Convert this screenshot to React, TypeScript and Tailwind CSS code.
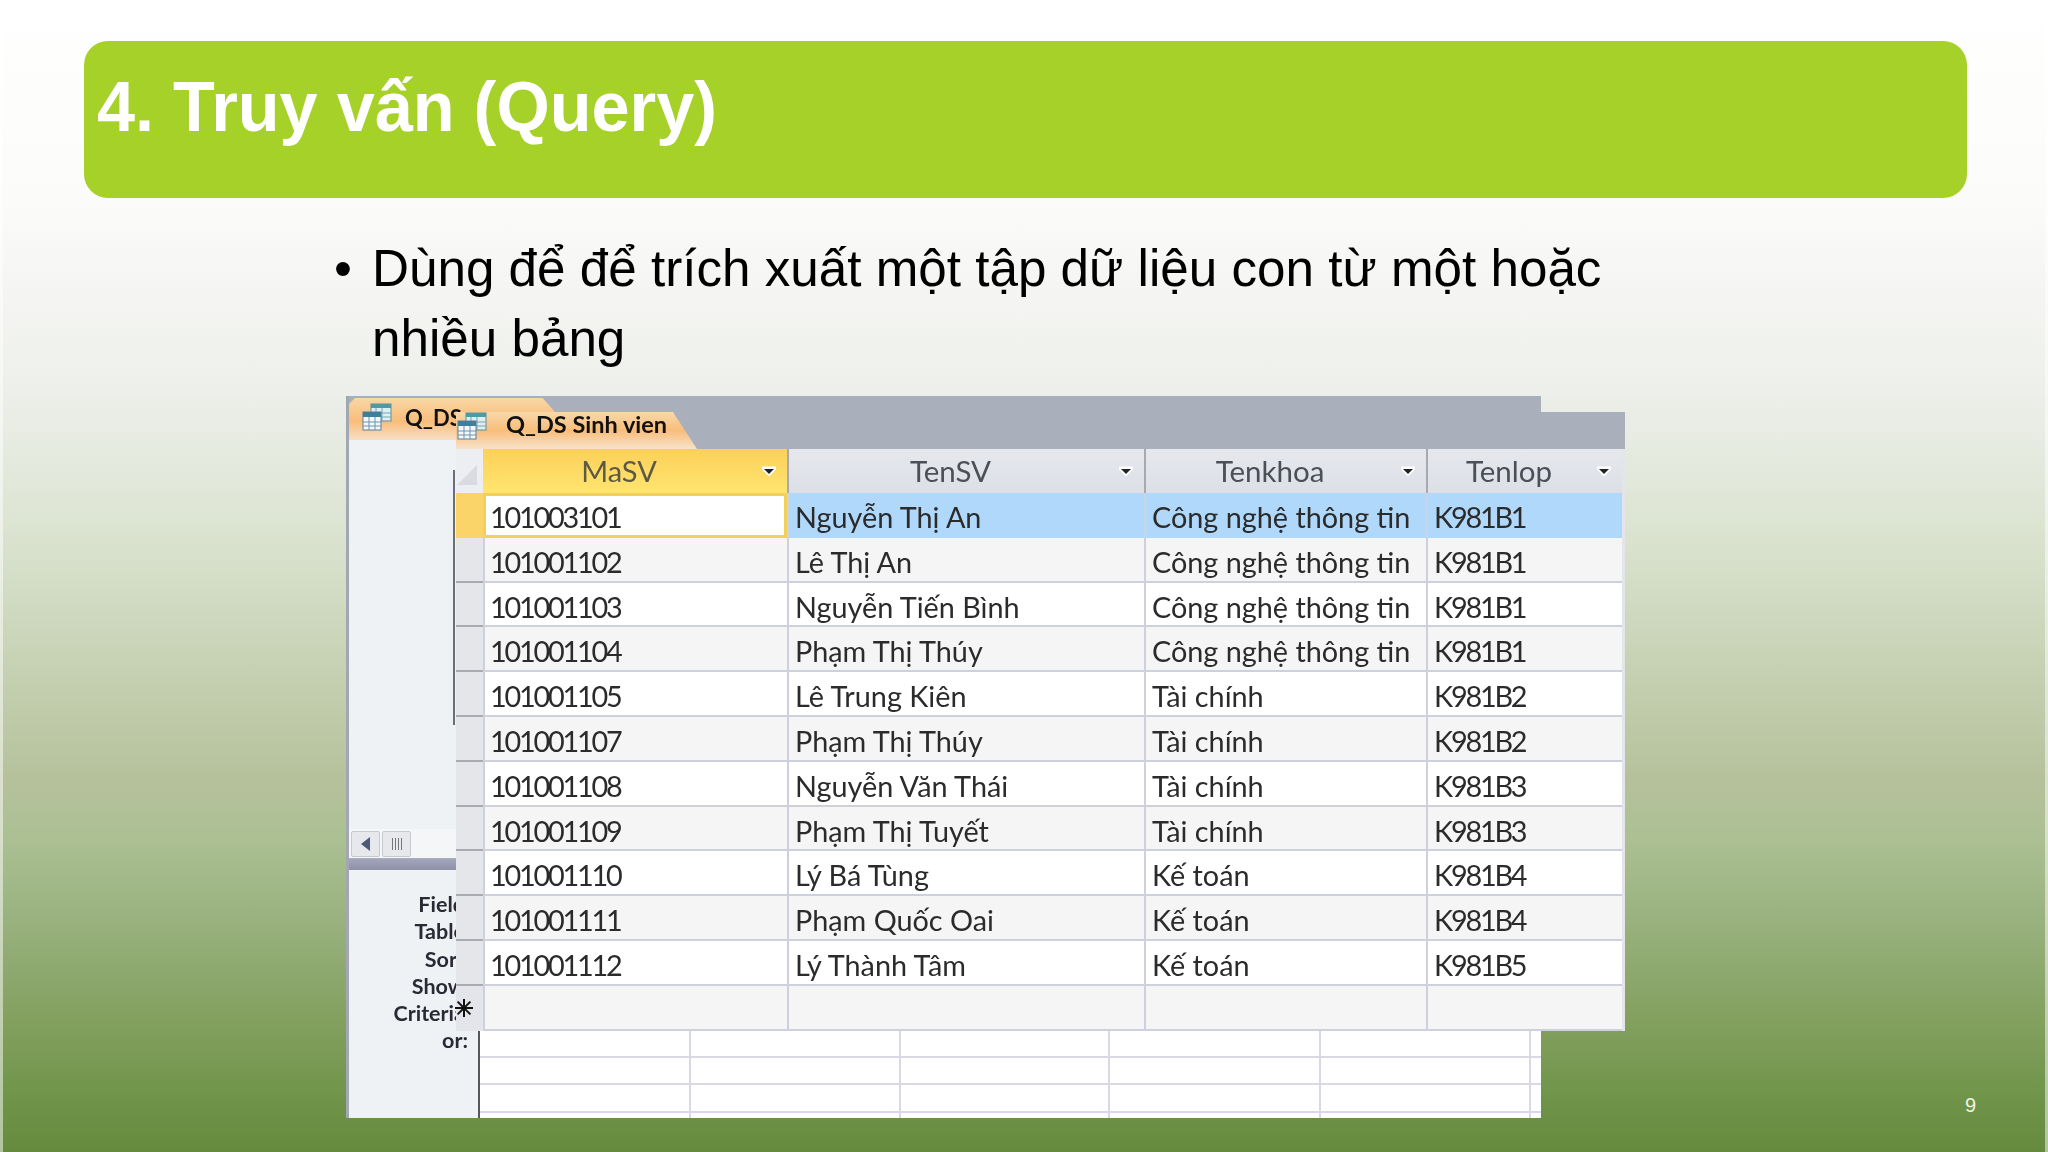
const rows = [
  ["101003101", "Nguyễn Thị An", "Công nghệ thông tin", "K981B1"],
  ["101001102", "Lê Thị An", "Công nghệ thông tin", "K981B1"],
  ["101001103", "Nguyễn Tiến Bình", "Công nghệ thông tin", "K981B1"],
  ["101001104", "Phạm Thị Thúy", "Công nghệ thông tin", "K981B1"],
  ["101001105", "Lê Trung Kiên", "Tài chính", "K981B2"],
  ["101001107", "Phạm Thị Thúy", "Tài chính", "K981B2"],
  ["101001108", "Nguyễn Văn Thái", "Tài chính", "K981B3"],
  ["101001109", "Phạm Thị Tuyết", "Tài chính", "K981B3"],
  ["101001110", "Lý Bá Tùng", "Kế toán", "K981B4"],
  ["101001111", "Phạm Quốc Oai", "Kế toán", "K981B4"],
  ["101001112", "Lý Thành Tâm", "Kế toán", "K981B5"],
];

const labels = ["Field", "Table", "Sort", "Show", "Criteria"];
const gridCols = "grid grid-cols-[27px_304px_357px_282px_196px]";

function QueryIcon({ className }: { className: string }) {
  return (
    <svg viewBox="0 0 30 28" className={className}>
      <rect x="9" y="1" width="20" height="17" fill="#dfeef2" stroke="#5d8f99" />
      <rect x="9" y="1" width="20" height="4" fill="#4f9aa3" />
      <path d="M14 5v13M20 5v13M9 10h20M9 14h20" stroke="#7aa3ad" />
      <rect x="1" y="9" width="18" height="18" fill="#f4f8fa" stroke="#5b7f9b" />
      <rect x="1" y="9" width="18" height="5" fill="#3f7f9c" />
      <path d="M7 14v13M13 14v13M1 19h18M1 23h18" stroke="#6f93ad" />
    </svg>
  );
}

function Arrow() {
  return (
    <svg viewBox="0 0 16 12" className="absolute right-[10px] top-[16px] h-[12px] w-[16px]">
      <path d="M1 1.5h14v3l-7 7-7-7z" fill="#ffffff" />
      <path d="M3 4h10l-5 5z" fill="#222222" />
    </svg>
  );
}

function HeaderCell({ name, active }: { name: string; active?: boolean }) {
  return (
    <div
      className={
        active
          ? "relative flex items-center justify-center pr-[32px] text-[29px] text-[#5c5a45] bg-[linear-gradient(180deg,#fbd05a,#ffe56f)]"
          : "relative flex items-center justify-center pr-[32px] text-[29.5px] text-[#4b5058] bg-[linear-gradient(180deg,#e6e8ed,#dcdfe6)] border-l-2 border-[#a7a9ae]"
      }
    >
      {name}
      <Arrow />
    </div>
  );
}

export default function App() {
  return (
    <div className="relative h-[1152px] w-[2048px] overflow-hidden bg-[linear-gradient(180deg,#ffffff_0%,#fbfbf9_17.4%,#eef0ec_33.2%,#dbe3d0_46.4%,#c8d3b6_56.9%,#b6c19c_67.4%,#acc093_72.7%,#97b07c_80.6%,#83a05f_88.5%,#6f9449_95.4%,#668a3d_100%)] pt-[41px] pl-[84px] font-['Liberation_Sans',sans-serif]">
      <div className="absolute inset-y-0 left-0 w-[3px] bg-white/50" />
      <div className="absolute inset-y-0 right-0 w-[3px] bg-white/50" />

      <div className="flex h-[157px] w-[1883px] rounded-[24px] bg-[#a6d129] pl-[13px] pt-[26px]">
        <h1 className="origin-left scale-x-[.964] whitespace-nowrap text-[71px] font-bold leading-[80px] text-white">
          4. Truy vấn (Query)
        </h1>
      </div>

      <div className="ml-[250px] mt-[36px] flex w-[1300px] text-[51.2px] leading-[70px] text-black">
        <span className="w-[38px] shrink-0">•</span>
        <p>
          Dùng để để trích xuất một tập dữ liệu con từ một hoặc
          <br />
          nhiều bảng
        </p>
      </div>

      {/* two Access windows laid over each other */}
      <div className="relative ml-[262px] mt-[22px] h-[722px] w-[1279px] font-['Lato',sans-serif] blur-[0.4px]">
        {/* back window: query design */}
        <div className="flex h-full w-[1195px] flex-col border-l-[3px] border-[#a2a8b1] bg-[#a9b0bb] pt-[2px]">
          <div className="flex h-[42px] w-[206px] items-start gap-[13px] bg-[linear-gradient(180deg,#f8d7a6,#f9bd7a_55%,#f7dfc6)] pl-[13px] pt-[5px] [clip-path:polygon(0_6px,6px_0,94%_0,100%_14px,100%_100%,0_100%)]">
            <QueryIcon className="h-[28px] w-[30px]" />
            <span className="text-[22px] font-bold leading-[30px] text-[#111111]">Q_DS</span>
          </div>
          <div className="h-[389px] w-[1192px] bg-[#eff2f5] pl-[104px] pt-[30px]">
            <div className="h-[255px] w-[2px] bg-[#6b6e74]" />
          </div>
          <div className="flex h-[29px] w-[1192px] items-center gap-[2px] bg-[#f5f6f8] pl-[2px]">
            <div className="flex h-[26px] w-[29px] items-center justify-center rounded-[2px] border border-[#c5c9d0] bg-[#e6e8ec]">
              <div className="h-0 w-0 border-y-[7px] border-r-[9px] border-y-transparent border-r-[#4a5a78]" />
            </div>
            <div className="flex h-[26px] w-[29px] items-center justify-center gap-[2px] rounded-[2px] border border-[#c5c9d0] bg-[#e6e8ec]">
              <i className="h-[12px] w-px bg-[#777]" />
              <i className="h-[12px] w-px bg-[#777]" />
              <i className="h-[12px] w-px bg-[#777]" />
              <i className="h-[12px] w-px bg-[#777]" />
            </div>
          </div>
          <div className="mt-[1px] h-[11px] w-[1192px] bg-[linear-gradient(180deg,#a3a5bb,#8f91ab)]" />
          <div className="flex min-h-0 flex-1">
            <div className="w-[131px] shrink-0 border-r-2 border-[#55585e] bg-[#eff2f5] pt-[21px] pr-[13px] text-right text-[21.5px] font-bold leading-[27.3px] text-[#2a2a35]">
              {labels.map((label) => (
                <div key={label}>{label}</div>
              ))}
              <div className="-mr-[3px]">or:</div>
            </div>
            <div className="grid flex-1 grid-cols-[211px_210px_209px_211px_210px_10px] bg-white">
              {[0, 1, 2, 3, 4, 5].map((i) => (
                <div key={i} className="flex flex-col border-r-2 border-[#d9d9e6] last:border-r-0">
                  <div className="h-[188px] border-b-2 border-[#d9d9e6]" />
                  <div className="h-[27px] border-b-2 border-[#d9d9e6]" />
                  <div className="h-[28px] border-b-2 border-[#d9d9e6]" />
                </div>
              ))}
            </div>
          </div>
        </div>

        {/* front window: datasheet */}
        <div className="absolute left-[110px] top-[16px] flex h-[619px] w-[1169px] flex-col bg-[#e3e5ea]">
          <div className="h-[37px] bg-[#a9b0bb]">
            <div className="flex h-full w-[241px] items-start gap-[19px] bg-[linear-gradient(180deg,#f8d9aa,#f9bd7a_50%,#f7e2cb)] pl-[1px] [clip-path:polygon(0_0,90%_0,100%_100%,0_100%)]">
              <QueryIcon className="h-[28px] w-[30px]" />
              <span className="text-[23.5px] font-bold leading-[24px] text-[#111111]">Q_DS Sinh vien</span>
            </div>
          </div>
          <div className={`${gridCols} h-[44px]`}>
            <div className="relative bg-[#eceef1]">
              <div className="absolute bottom-[8px] right-[6px] h-0 w-0 border-b-[20px] border-l-[20px] border-b-[#d9dbe0] border-l-transparent" />
            </div>
            <HeaderCell name="MaSV" active />
            <HeaderCell name="TenSV" />
            <HeaderCell name="Tenkhoa" />
            <HeaderCell name="Tenlop" />
          </div>
          {rows.map((row, i) => (
            <div key={row[0]} className={`${gridCols} h-[44.8px] text-[28.8px] leading-[36px] text-[#2b2b2b]`}>
              <div className={i === 0 ? "bg-[#fad468]" : "border-b-2 border-[#a9abb0] bg-[#e4e6ea]"} />
              {row.map((cell, j) => (
                <div
                  key={j}
                  className={`${j === 0 || j === 3 ? "tracking-[-2.2px]" : ""} ${
                    i === 0
                      ? j === 0
                        ? "border-[3px] border-[#f3cf5c] bg-white pl-[4px] pt-[3.5px] leading-[35px]"
                        : "border-l-2 border-[#c8d5e6] bg-[#b0d8fb] pl-[6px] pt-[6px]"
                      : i % 2 === 0
                        ? `border-b-2 border-l-2 border-[#cfd0de] bg-white pt-[6px] ${j === 0 ? "pl-[5px]" : "pl-[6px]"}`
                        : `border-b-2 border-l-2 border-[#cfd0de] bg-[#f5f5f5] pt-[6px] ${j === 0 ? "pl-[5px]" : "pl-[6px]"}`
                  }`}
                >
                  {cell}
                </div>
              ))}
            </div>
          ))}
          <div className={`${gridCols} h-[44.8px]`}>
            <div className="relative">
              <svg viewBox="0 0 18 18" className="absolute -left-[1px] top-[13px] h-[18px] w-[18px]">
                <path d="M9 0v18M0 9h18M2.6 2.6l12.8 12.8M15.4 2.6L2.6 15.4" stroke="#111111" strokeWidth="2" />
              </svg>
            </div>
            {[0, 1, 2, 3].map((i) => (
              <div key={i} className="border-b-2 border-l-2 border-[#cfd0de] bg-[#f5f5f6]" />
            ))}
          </div>
        </div>
      </div>

      <span className="absolute left-[1965px] top-[1095px] text-[20px] leading-[20px] text-[#eef3e4]">9</span>
    </div>
  );
}
